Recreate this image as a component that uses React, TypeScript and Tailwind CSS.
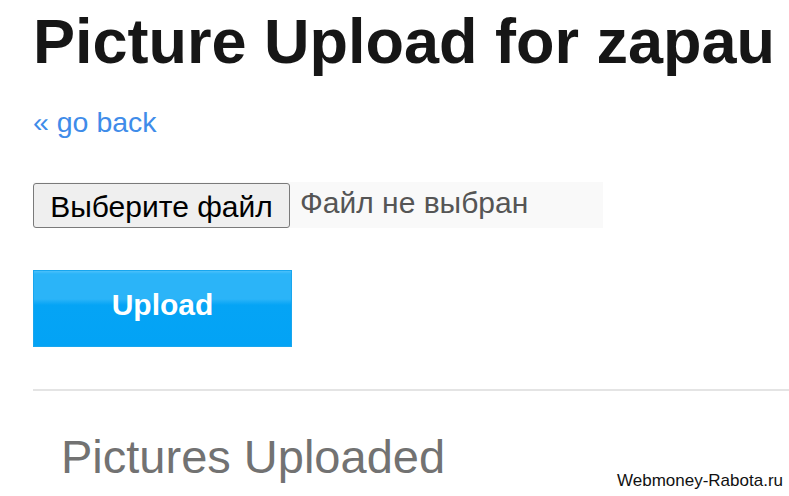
export default function App() {
  return (
    <div className="relative h-[496px] w-full overflow-hidden bg-white font-['Liberation_Sans',Arial,sans-serif]">
      <div className="pl-[33px]">
        {/* Heading */}
        <h1 className="pt-[6px] text-[63px] font-bold leading-[70px] text-[#161616]">
          Picture Upload for zapau
        </h1>

        <a href="#" className="mt-[30px] block w-fit text-[28.5px] leading-[32px] text-[#3f8ce9]">
          « go back
        </a>

        {/* File picker */}
        <div className="mt-[44px] flex h-[46px] w-[570px] items-center bg-[#f9f9f9]">
          <button className="h-[45px] w-[257px] rounded-[3px] border border-[#7a7a7a] bg-[#efefef] pb-[6px] text-[30px] text-black">
            Выберите файл
          </button>
          <span className="pb-[6px] pl-[10px] text-[30px] text-[#555]">Файл не выбран</span>
        </div>

        {/* Submit */}
        <button className="mt-[42px] block h-[77px] w-[259px] border border-[#19a6ee] bg-[linear-gradient(180deg,#4cc0fa_0px,#2bb4f8_3px,#2bb4f8_28px,#05a4f5_34px,#03a3f5_100%)] pb-[8px] text-[30px] font-bold text-white">
          Upload
        </button>

        <div className="mt-[42px] h-[2px] bg-[#e4e4e4]" />

        <h2 className="ml-[28px] mt-[40px] text-[47px] leading-[52px] text-[#727272]">
          Pictures Uploaded
        </h2>
      </div>

      {/* Watermark */}
      <div className="absolute bottom-[7px] right-[6px] text-[17px] leading-none text-[#111]">
        Webmoney-Rabota.ru
      </div>
    </div>
  )
}
